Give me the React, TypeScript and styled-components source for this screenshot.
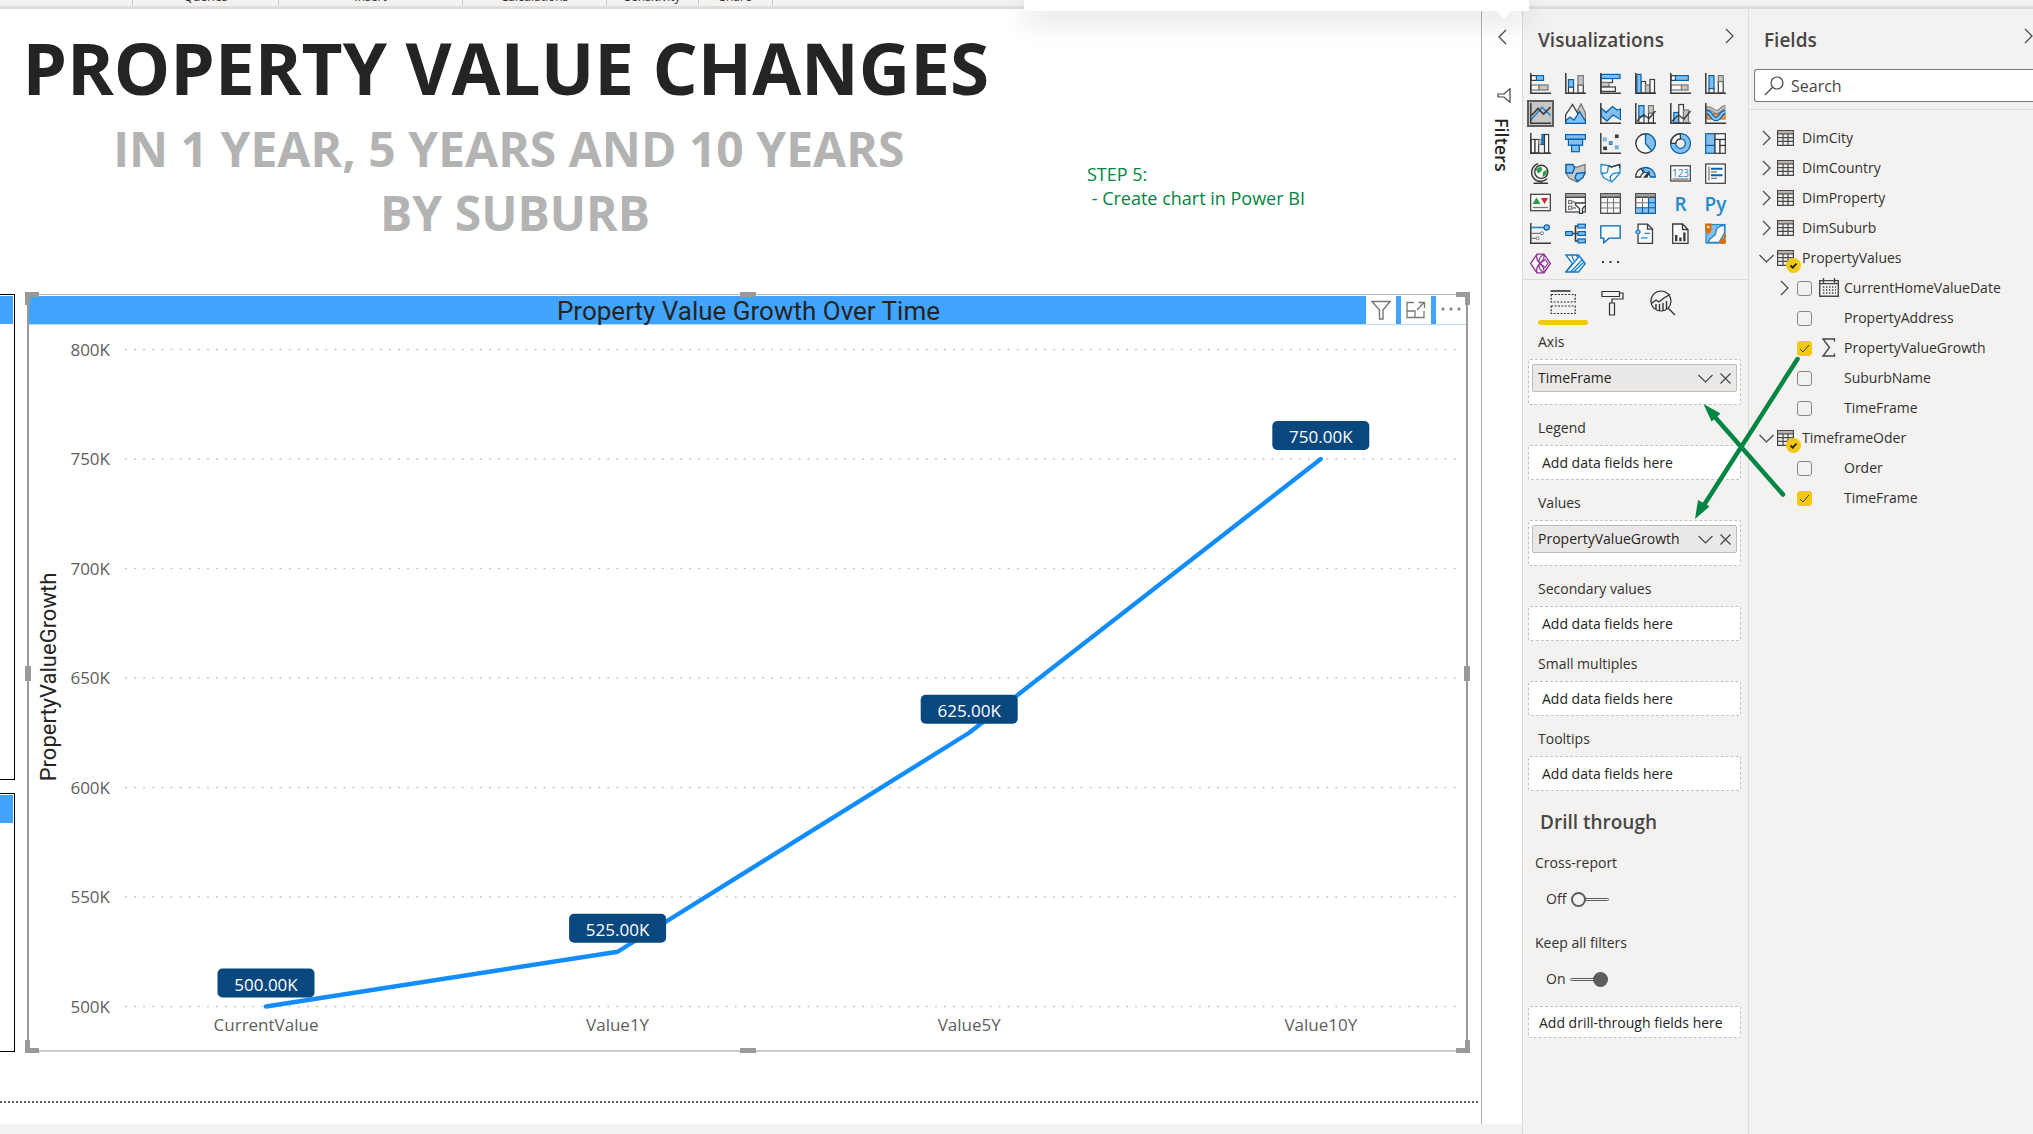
import React from "react";
import styled, { createGlobalStyle } from "styled-components";

const ui = '"Open Sans", "Noto Sans", sans-serif';
const din = 'Roboto, "Liberation Sans", sans-serif';
const green = "#008542";

const Global = createGlobalStyle`
  *, *::before, *::after { box-sizing: border-box; }
  body { margin: 0; font-family: ${ui}; color: #323130; background: #f3f2f1; }
  button, input { font: inherit; color: inherit; }
  button { padding: 0; border: 0; background: none; cursor: pointer; }
  svg { display: block; }
  h1, h2, h3, p, ul { margin: 0; padding: 0; }
  ul { list-style: none; }
`;

const Shell = styled.div`
  position: relative;
  display: flex;
  flex-direction: column;
  min-height: 100vh;
  overflow: hidden;
`;

/* Ribbon */
const Ribbon = styled.div`
  display: flex;
  height: 9px;
  align-items: flex-end;
  background: #f3f2f1;
  border-bottom: 3px solid #dfdedd;
`;
const RibbonGroup = styled.div<{ $w: number }>`
  width: ${(p) => p.$w}px;
  height: 100%;
  display: flex;
  align-items: flex-end;
  justify-content: center;
  border-right: 1px solid #c8c6c4;
  font-size: 12px;
  line-height: 16px;
  border-bottom: 1px solid #f3f2f1;
`;
const Callout = styled.div`
  position: absolute;
  z-index: 3;
  top: 0;
  left: 1024px;
  width: 505px;
  height: 11px;
  background: #fff;
  box-shadow: 0 8px 28px rgba(0, 0, 0, 0.2);
  &::after {
    content: "";
    position: absolute;
    top: 11px;
    right: 17px;
    border: 8px solid transparent;
    border-top-color: #fff;
    border-bottom: 0;
  }
`;

const Body = styled.div`
  flex: 1;
  display: flex;
  align-items: stretch;
`;

/* Report canvas */
const Report = styled.main`
  flex: 1;
  min-width: 0;
  display: flex;
  flex-direction: column;
  margin-bottom: 12px;
  background: #fff;
  border-right: 1px solid #b3b0ad;
`;
const Banner = styled.header`
  display: flex;
  align-items: flex-start;
  height: 283px;
`;
const Titles = styled.div`
  width: 1030px;
  padding-top: 10px;
  text-align: center;
  font-weight: 700;
  white-space: nowrap;
`;
const Title = styled.h1`
  font-size: 71px;
  line-height: 98px;
  color: #252423;
`;
const Subtitle = styled.p`
  font-size: 48px;
  line-height: 64px;
  color: #b3b3b3;
`;
const Note = styled.p`
  padding: 153px 0 0 57px;
  font-size: 18px;
  line-height: 24px;
  color: ${green};
  white-space: pre;
`;
const Visuals = styled.div`
  flex: 1;
  display: flex;
  align-items: stretch;
  padding: 2px 13px 0 0;
`;
const Neighbours = styled.div`
  width: 15px;
  margin-right: 12px;
  display: flex;
  flex-direction: column;
  gap: 13px;
`;
const Neighbour = styled.div<{ $grow: number }>`
  flex: ${(p) => p.$grow} 0 0;
  border: 1px solid #000;
  border-left: 0;
  padding: 1px 1px 0 0;
  &::before {
    content: "";
    display: block;
    height: 28px;
    background: #41a4ff;
  }
`;
const Visual = styled.section`
  position: relative;
  flex: 1;
  display: flex;
  flex-direction: column;
  border: solid #999;
  border-width: 1px 2px;
  border-top-color: #bebbb8;
  border-bottom: 2px solid #cdcbc9;
`;
const VisualHead = styled.div`
  display: flex;
  align-items: stretch;
  height: 29px;
  margin-top: 1px;
  background: #41a4ff;
  border-bottom: 1px solid #b5dbff;
`;
const VisualTitle = styled.h2`
  flex: 1;
  padding-left: 102px;
  text-align: center;
  font: 400 26px/30px ${din};
  color: #252423;
`;
const HeadButtons = styled.div`
  display: flex;
  gap: 5px;
`;
const HeadButton = styled.button`
  width: 30px;
  display: grid;
  place-items: center;
  background: #fff;
`;
const Plot = styled.svg`
  flex: 1;
  width: 100%;
  min-height: 0;
`;
const Handle = styled.span<{ $at: string }>`
  position: absolute;
  ${(p) =>
    (
      ({
        t: "top:-3px;left:calc(50% - 8px);width:16px;height:5px;background:#999;",
        b: "bottom:-3px;left:calc(50% - 8px);width:16px;height:5px;background:#999;",
        l: "left:-4px;top:calc(50% - 7px);width:6px;height:15px;background:#999;",
        r: "right:-4px;top:calc(50% - 7px);width:6px;height:15px;background:#999;",
        tl: "top:-3px;left:-4px;border-width:5px 0 0 5px;",
        tr: "top:-3px;right:-4px;border-width:5px 5px 0 0;",
        bl: "bottom:-3px;left:-4px;border-width:0 0 5px 5px;",
        br: "bottom:-3px;right:-4px;border-width:0 5px 5px 0;",
      }) as Record<string, string>
    )[p.$at]}
  ${(p) => p.$at.length === 2 && "width:14px;height:13px;border-style:solid;border-color:#999;"}
`;
const PageEdge = styled.div`
  height: 72px;
  padding: 49px 2px 0 0;
  &::before {
    content: "";
    display: block;
    height: 2px;
    background: repeating-linear-gradient(90deg, #605e5c 0 2px, #fff 2px 4px);
  }
`;

/* Filters rail */
const Rail = styled.aside`
  width: 40px;
  margin-bottom: 12px;
  display: flex;
  flex-direction: column;
  align-items: center;
  padding-top: 20px;
  background: #fff;
`;
const RailTitle = styled.h2`
  margin-top: 15px;
  writing-mode: vertical-rl;
  font-size: 18px;
  font-weight: 600;
  line-height: 24px;
  color: #252423;
`;
const RailIcon = styled.span`
  margin-top: 43px;
  padding-left: 3px;
`;

/* Panes */
const Panes = styled.div`
  position: relative;
  display: flex;
`;
const Pane = styled.aside<{ $w: number }>`
  width: ${(p) => p.$w}px;
  border-left: 1px solid #dddbda;
  background: #f3f2f1;
  overflow: hidden;
`;
const PaneHead = styled.div<{ $h: number; $right: number }>`
  display: flex;
  justify-content: space-between;
  height: ${(p) => p.$h}px;
  padding: 17px ${(p) => p.$right}px 0 15px;
  button { height: 20px; }
`;
const PaneTitle = styled.h2`
  font-size: 19px;
  font-weight: 600;
  line-height: 28px;
  color: #484644;
`;
const Gallery = styled.div`
  display: grid;
  grid-template-columns: repeat(6, 27px);
  grid-auto-rows: 27px;
  gap: 3px 8px;
  padding-left: 4px;
  height: 209px;
`;
const GalleryButton = styled.button<{ $on?: boolean }>`
  display: grid;
  place-items: center;
  ${(p) => p.$on && "background:#c8c6c4; box-shadow: inset 0 0 0 2px #605e5c;"}
`;
const Glyph = styled.span`
  font-size: 19px;
  font-weight: 600;
  line-height: 20px;
  color: #2488c9;
`;
const Tabs = styled.div`
  display: flex;
  height: 46px;
  padding-left: 15px;
  border-top: 1px solid #dddbda;
`;
const Tab = styled.button<{ $on?: boolean }>`
  width: 50px;
  height: 45px;
  display: flex;
  flex-direction: column;
  align-items: center;
  justify-content: space-between;
  padding-top: 10px;
  &::after {
    content: "";
    width: 50px;
    height: 5px;
    border-radius: 3px;
    background: ${(p) => (p.$on ? "#f2c811" : "transparent")};
  }
`;
const Wells = styled.div`
  display: flex;
  flex-direction: column;
  gap: 13px;
  padding: 7px 7px 0 5px;
`;
const WellLabel = styled.h3`
  margin: 0 0 7px 10px;
  font-size: 14px;
  font-weight: 400;
  line-height: 20px;
  color: #323130;
`;
const WellBox = styled.div<{ $filled?: boolean }>`
  height: ${(p) => (p.$filled ? 46 : 35)}px;
  padding: ${(p) => (p.$filled ? "4px 3px" : "0 13px")};
  border: 1px dashed #c3c1bf;
  border-radius: 2px;
  background: #fff;
  font-size: 14px;
  line-height: 33px;
  color: #252423;
`;
const Chip = styled.div`
  display: flex;
  align-items: center;
  height: 28px;
  padding: 0 5px;
  border: 1px solid #bebbb8;
  border-radius: 2px;
  background: #ebe9e8;
  line-height: 26px;
  span { flex: 1; }
  button + button { margin-left: 7px; }
`;
const Drill = styled.div`
  padding: 15px 7px 0 5px;
`;
const DrillTitle = styled.h2`
  margin-left: 12px;
  font-size: 19px;
  font-weight: 600;
  line-height: 32px;
  color: #484644;
`;
const Option = styled.div`
  height: 80px;
  padding: 15px 0 0 7px;
  font-size: 14px;
  line-height: 20px;
`;
const Switch = styled.label`
  display: flex;
  align-items: center;
  gap: 5px;
  margin: 16px 0 0 11px;
`;
const SwitchInput = styled.input`
  appearance: none;
  position: relative;
  width: 38px;
  height: 15px;
  margin: 0;
  &::before {
    content: "";
    position: absolute;
    inset: 6px 0;
    border: 1px solid #605e5c;
    border-radius: 2px;
  }
  &::after {
    content: "";
    position: absolute;
    left: 0;
    width: 15px;
    height: 15px;
    border: 2px solid #605e5c;
    border-radius: 50%;
    background: #f3f2f1;
  }
  &:checked::after { left: auto; right: 0; background: #605e5c; }
`;
const DrillBox = styled(WellBox)`
  height: 32px;
  margin-top: 8px;
  padding: 0 10px;
  line-height: 31px;
  white-space: nowrap;
`;

/* Fields */
const SearchBox = styled.label`
  display: flex;
  align-items: center;
  height: 33px;
  margin-left: 5px;
  padding-left: 9px;
  gap: 7px;
  border: 1px solid #797775;
  border-right: 0;
  border-radius: 3px 0 0 3px;
  background: #fff;
`;
const SearchInput = styled.input`
  flex: 1;
  min-width: 0;
  padding: 0;
  border: 0;
  outline: 0;
  background: none;
  font-size: 16px;
  line-height: 24px;
  &::placeholder { color: #484644; opacity: 1; }
`;
const Tree = styled.ul`
  margin-top: 7px;
  padding-top: 13px;
  border-top: 1px solid #dddbda;
  font-size: 14px;
  line-height: 30px;
`;
const TableRow = styled.div`
  display: flex;
  align-items: center;
  height: 30px;
  padding-left: 9px;
`;
const Twisty = styled.button`
  width: 16px;
  height: 16px;
  display: grid;
  place-items: center;
`;
const TableIcon = styled.span`
  position: relative;
  margin: 0 8px 0 3px;
`;
const Badge = styled.span`
  position: absolute;
  left: 9px;
  top: 8px;
`;
const FieldRow = styled.div`
  display: flex;
  align-items: center;
  height: 30px;
  padding-left: 27px;
`;
const TwistySlot = styled.span`
  width: 20px;
  height: 16px;
`;
const FieldLabel = styled.label`
  display: flex;
  align-items: center;
`;
const Check = styled.input`
  appearance: none;
  width: 15px;
  height: 15px;
  margin: 0 7px 0 1px;
  border: 1px solid #8a8886;
  border-radius: 3px;
  background: transparent;
  &:checked {
    border-color: #f2c811;
    background: #f2c811
      url("data:image/svg+xml,%3Csvg xmlns='http://www.w3.org/2000/svg' viewBox='0 0 13 13'%3E%3Cpath d='M2 7l3 3 6-7' fill='none' stroke='%234a4020' stroke-width='1'/%3E%3C/svg%3E")
      center / 13px no-repeat;
  }
`;
const FieldIcon = styled.span`
  width: 25px;
  height: 20px;
`;
const Arrows = styled.svg`
  position: absolute;
  top: 341px;
  left: 160px;
  pointer-events: none;
`;

/* ---- icons ---- */
const D = "#3b3a39";
const G = "#797775";
const GF = "#c8c6c4";
const B = "#0063b1";
const BF = "#83beec";
const W = "#fafafa";
const axis = <path d="M.8 0V20.2H21" fill="none" stroke={D} strokeWidth="1.5" />;
const r = (x: number, y: number, x2: number, y2: number, f: string, s: string) => (
  <rect key={`${x}-${y}-${x2}-${y2}`} x={x} y={y} width={x2 - x} height={y2 - y} fill={f} stroke={s} strokeWidth="1.2" />
);
const p = (d: string, s: string = D, f: string = "none", w: number = 1.3) => (
  <path d={d} fill={f} stroke={s} strokeWidth={w} />
);

const gallery: [string, React.ReactNode][] = [
  ["Stacked bar chart", <>{r(1, 2.6, 6.5, 7.4, W, D)}{r(6.5, 2.6, 13.5, 7.4, BF, B)}{r(1, 12, 9, 17, W, G)}{r(9, 12, 18, 17, GF, G)}{axis}</>],
  ["Stacked column chart", <>{r(3.5, 14, 8.5, 20, W, D)}{r(3.5, 6.6, 8.5, 14, BF, B)}{r(13, 12, 18.3, 20, W, D)}{r(13, 2.6, 18.3, 12, GF, G)}{axis}</>],
  ["Clustered bar chart", <>{r(1, 5.5, 12.5, 9.5, W, D)}{r(1, 9.5, 9, 14, GF, G)}{r(1, 14, 15.4, 18.4, W, D)}{r(1, 1.4, 20, 5.5, BF, B)}{axis}</>],
  ["Clustered column chart", <>{r(6, 8.5, 10.5, 20, W, D)}{r(10.5, 12, 15, 20, GF, G)}{r(15, 6.5, 19.5, 20, W, D)}{r(1.8, 1.4, 6, 20, BF, B)}{axis}</>],
  ["100% stacked bar chart", <>{r(1, 2.6, 5.5, 7.4, W, D)}{r(5.5, 2.6, 18.3, 7.4, BF, B)}{r(1, 12, 11.5, 17, W, G)}{r(11.5, 12, 18, 17, GF, G)}{axis}</>],
  ["100% stacked column chart", <>{r(4, 15.5, 9, 20, W, D)}{r(4, 2.6, 9, 15.5, BF, B)}{r(13.3, 8.5, 18.2, 20, W, D)}{r(13.3, 2.6, 18.2, 8.5, GF, G)}{axis}</>],
  ["Line chart", <>{p("M1 17L12 4.5L20.5 12.5", "#2488c9", "none", 1.6)}{p("M1.5 12.5L8 5.5L13.5 11L20.5 4", D, "none", 1.6)}{axis}</>],
  ["Area chart", <>{p("M10 12L16 .8L20.5 10V20H10z", G, GF)}{p("M.6 20V12L7.5 1.5L13.5 12V20z", D, W)}{p("M1 20.3L1 17.5L5 14L9 17L14.5 8.500L20.4 18V20.3z", B, BF)}</>],
  ["Stacked area chart", <>{p("M1 5L6 9.5L12.5 3.5L17 7L20.5 6V16.5L13 12L7 18L1 13z", B, BF)}{axis}</>],
  ["Line and stacked column chart", <>{r(3.8, 13.5, 9, 20, W, D)}{r(3.8, 2.6, 9, 13.5, BF, B)}{r(13.5, 10, 18.4, 20, W, D)}{r(13.5, 2.6, 18.4, 10, GF, G)}{p("M1.5 18.5L8.5 11.5L14 15.5L20.5 8")}{axis}</>],
  ["Line and clustered column chart", <>{r(3.8, 9.5, 8.8, 20, BF, B)}{r(8.8, 1.5, 13.5, 20, W, D)}{r(13.5, 7, 18.5, 20, GF, G)}{p("M1.5 18.5L8.5 12L14 16L20.5 8")}{axis}</>],
  ["Ribbon chart", <>{r(2, 11, 20, 16, "#f0a15a", "#d9690c")}{p("M1 5C8 5 8 9 12 9S16 4 20.5 4", G, "none", 4)}{p("M1 5C8 5 8 9 12 9S16 4 20.5 4", GF, "none", 2)}{p("M1.5 9C7 9 6 16 11 16S15 9 20.5 9", B, "none", 4.6)}{p("M1.5 9C7 9 6 16 11 16S15 9 20.5 9", BF, "none", 2.2)}{axis}</>],
  ["Waterfall chart", <>{r(1, 6.5, 5, 20, W, D)}{r(5, 6.5, 8.6, 20, W, D)}{r(8.6, 6.5, 12, 11.5, GF, G)}{r(12, 1.5, 14.5, 11.5, "#2488c9", B)}{r(14.5, 1.5, 18.6, 20, W, D)}{axis}</>],
  ["Funnel chart", <>{r(.6, 1.6, 20.4, 6.3, BF, B)}{r(3.4, 6.3, 17.6, 12.3, BF, B)}{r(6.6, 12.3, 14.3, 18.7, BF, B)}</>],
  ["Scatter chart", <><rect x="15" y="1.5" width="3.6" height="3.6" fill={D} />{r(3.4, 5, 6.4, 8, BF, "#8fb6d6")}{r(9.4, 8.8, 12, 11.4, BF, "#2488c9")}<rect x="3.2" y="13.5" width="3.8" height="3.6" fill={D} />{r(15.6, 13, 18, 15.6, BF, "#5aa9e0")}{axis}</>],
  ["Pie chart", <><circle cx="10.5" cy="10.5" r="9.7" fill={W} stroke={D} strokeWidth="1.4" />{p("M10.5.8A9.7 9.7 0 0 1 16.8 17.9L10.5 10.5z", B, BF)}</>],
  ["Donut chart", <><circle cx="10.5" cy="10.5" r="7.4" fill="none" stroke={B} strokeWidth="6.4" /><circle cx="10.5" cy="10.5" r="7.4" fill="none" stroke={BF} strokeWidth="4" />{p("M.9 10.4A9.7 9.7 0 0 1 10.4.8V6A4.6 4.6 0 0 0 5.8 10.4z", D, W)}</>],
  ["Treemap", <>{r(.7, .7, 10, 12.5, BF, B)}{r(.7, 12.5, 10, 20.3, BF, B)}{r(10, .7, 20.3, 6.5, W, D)}{r(10, 6.5, 15, 20.3, W, D)}{r(15, 6.5, 20.3, 12.5, W, D)}{r(15, 12.5, 20.3, 20.3, W, D)}</>],
  ["Map", <><circle cx="11.3" cy="8.8" r="6.6" fill={W} stroke={D} strokeWidth="1.4" /><path d="M6 6L11 3.5L12.5 6.5L9 10.5L7 9zM13 9L17 6.5L16.5 11.5L12.5 14z" fill="#2c9a4b" />{p("M8 .8A9 9 0 1 0 17 15.8M11 17.5V20M3.500 20.3H18", D, "none", 1.5)}</>],
  ["Filled map", <>{p("M1 2L9 3L11 4.5L20 1.5V11L12 19L4 15L1 10z", G, GF)}{p("M1 1.5H8L9.5 5L7.5 10L1 10z", B, BF)}{p("M11.5 10.5L20 9.5L18 14.5L12.5 18.5L10 15z", B, BF)}</>],
  ["Shape map", <>{p("M1 1.5L9 2.5L11 4L20 1.5V10L12 19L4 15L1 10z", "#2488c9", W)}{p("M8.5 2.5L7.5 9L4 10.5L1.5 10M11 18L10 14L13 10.5L20 9.5", "#2488c9")}{p("M9 2.8L11.5 4L19.5 1.3V5")}</>],
  ["Gauge", <>{p("M.7 14A9.8 9.8 0 0 1 6 5.4L8.4 9.8A5 5 0 0 0 5.6 14z", D, W)}{p("M7.5 5A9.8 9.8 0 0 1 20.3 14H15.4A5 5 0 0 0 9.5 9.4z", B, BF)}{p("M9.5 14L14.5 8.5L12 14z", D, D)}</>],
  ["Card", <>{r(.7, 2.8, 20.3, 18, W, D)}<text x="10.5" y="13.500" textAnchor="middle" fontSize="10" fill="#2488c9" fontFamily="Open Sans">123</text>{p("M2.5 16H18.5", G)}</>],
  ["Multi-row card", <>{r(.7, 1, 20.3, 20.3, W, D)}{p("M4 3.5V17.5", G)}{p("M6 5.8H17.5M6 12.2H17.5", B, "none", 2)}{p("M6 8.8H12M6 15.4H12", G)}</>],
  ["KPI", <>{r(.7, 1.3, 20.3, 17.7, W, D)}<path d="M2.5 11L6.5 4.5L10.5 11z" fill="#2c9a4b" /><path d="M11 5H18L14.5 11z" fill="#d6272e" />{p("M3 14.5H18", G)}</>],
  ["Slicer", <>{r(.7, .7, 20.3, 19, W, D)}<rect x="1.200" y="1.200" width="18.600" height="2.600" fill="#a19f9d" />{p("M.7 4.300H20.3", D)}{p("M7.5 9H10M7.5 15H11", G)}{r(3.6, 7.5, 6.8, 10.5, W, G)}{r(3.6, 13.2, 6.8, 16.3, W, G)}{p("M10.500 10H21V12L17.5 15.500V20.5H14.500V15.500L10.500 12z", D, W)}</>],
  ["Table", <>{r(.7, .7, 20.3, 20.3, W, D)}<rect x="1" y="1" width="19" height="3" fill="#a19f9d" />{p("M.7 4.3H20.3", D)}{p("M7.5 4V20M13.5 4V20M1 9.8H20M1 15H20", G, "none", 1.1)}</>],
  ["Matrix", <>{r(.7, .7, 20.3, 20.3, W, D)}<rect x="1" y="1" width="19" height="3" fill="#a19f9d" /><path d="M14 4.5H20V20H1V15H14z" fill={BF} />{p("M.7 4.3H20.3", D)}{p("M7.5 4V15M13.5 4V15M1 9.8H14", G, "none", 1.1)}{p("M1 14.7H20.3M7.5 15V20.3M13.5 4.5V20.3M14 9.8H20M.7 20.3H20.3V4.5", B, "none", 1.1)}</>],
  ["R script visual", "R"],
  ["Python visual", "Py"],
  ["Key influencers", <>{axis}{p("M1 4.5H14", "#2488c9", "none", 1.7)}<circle cx="16.7" cy="4.5" r="2.7" fill={BF} stroke={B} strokeWidth="1.2" />{p("M1 10.3H10.5M1 15.3H6", G)}<circle cx="12" cy="10.3" r="1.5" fill={W} stroke={G} /><circle cx="7.5" cy="15.3" r="1.5" fill={W} stroke={G} /></>],
  ["Decomposition tree", <>{p("M7 10.5H13M13 3H10.5V18H13", D, "none", 1.6)}{r(.7, 8.6, 7.3, 12.4, BF, B)}{r(13, 1.2, 20.3, 5, BF, B)}{r(13, 8.6, 20.3, 12.4, BF, B)}{r(13, 16, 20.3, 19.8, BF, B)}</>],
  ["Q&A", <>{p("M.8 2.8H20.2V15.2H9L3.8 19.8V15.2H.8z", B, W)}</>],
  ["Smart narrative", <>{p("M3 6.5V1.2H12.5L17.5 6.2V20.3H3V12", D, W)}{p("M12.5 1.2V6.2H17.5", D)}<circle cx="3" cy="9" r="2.200" fill={BF} stroke={B} />{p("M9.5 10.3H15M6 14.8H12.500", "#2488c9", "none", 1.2)}</>],
  ["Paginated report", <>{p("M2.7 1H12.5L18 6.5V20.3H2.7z", D, W)}{p("M12.5 1V6.5H18", D)}{p("M6.2 12V18.3M10.4 14.5V18.3M14.4 9.5V18.3", D, "none", 2.4)}</>],
  ["ArcGIS map", <>{r(1, 1.5, 20, 20, BF, "#2488c9")}{p("M3 19.500C5 13 11 14 11 9S15 3 19.500 2V10L14 19.500z", "#2488c9", W)}<path d="M.2.5H6.5V7L3.4 12L.2 7z" fill="#e06c00" /><circle cx="3.3" cy="4" r="1.3" fill={W} /><circle cx="17.8" cy="18.3" r="3" fill="#e06c00" /><circle cx="20" cy="13" r="1.8" fill="#e06c00" /></>],
  ["Power Apps", <>{p("M7 1.200H14L20.3 10.5L14 19.800H7L.7 10.5z", "#8e2f96", W)}<g fill="none" stroke="#8e2f96" strokeWidth="1.200"><path d="M7 1.200C6 5 7 8 10 10.500C7 13 6 16 7 19.800M14 1.200C9 4 8 8 10 10.500C12.500 8 15 5 14 1.200M14 19.800C15 16 12.500 13 10 10.500C8 13 9 17 14 19.800" /><path d="M10 10.500L15 6.500L18 10.500L15 14.500z" /></g></>],
  ["Power Automate", <>{p("M.8 2H13.5L20.3 10.5L13.5 19H.8L7.5 10.5z", "#1079c4", W)}{p("M1 19L14.500 3M5.500 19L17.500 6.500M6.5 2L9 8M11 2L13 5M8.500 19L19 9", "#1079c4", "none", 1.2)}</>],
  ["Get more visuals", <g key="m" fill="#323130"><rect x="2" y="8" width="2" height="2" /><rect x="9.5" y="8" width="2" height="2" /><rect x="17" y="8" width="2" height="2" /></g>],
];

const Svg = ({ w, h, children, c = "#484644" }: { w: number; h: number; children: React.ReactNode; c?: string }) => (
  <svg width={w} height={h} viewBox={`0 0 ${w} ${h}`} fill="none" stroke={c} strokeWidth="1.2" aria-hidden>
    {children}
  </svg>
);
const ChevronRight = () => <Svg w={9} h={16}><path d="M1 1l7 7-7 7" /></Svg>;
const ChevronLeft = () => <Svg w={9} h={16}><path d="M8 1L1 8l7 7" /></Svg>;
const ChevronDown = () => <Svg w={15} h={9}><path d="M.5 1l7 7 7-7" /></Svg>;
const Cross = () => <Svg w={11} h={11}><path d="M.5.5l10 10M10.5.5l-10 10" /></Svg>;
const GridIcon = () => (
  <Svg w={17} h={16}>
    <path d="M.6.6h15.8v14.8H.6zM1 3.8h15.4M1 7.6h15.4M1 11.4h15.4M6 4v11.4M11 4v11.4" />
    <path d="M1 2.2h15.4" stroke="#a19f9d" />
  </Svg>
);
const SelectedBadge = () => (
  <Badge>
    <svg width="15" height="15" viewBox="0 0 15 15">
      <circle cx="7.5" cy="7.5" r="7.5" fill="#f2c811" />
      <path d="M4.5 7.5l2.2 2.2 3.8-4" fill="none" stroke="#252423" strokeWidth="1.8" />
    </svg>
  </Badge>
);
const Calendar = () => (
  <Svg w={20} h={19}>
    <path d="M.7 2.6h18.6v15.7H.7zM.7 5.6h18.6M4.5 0v5M15.5 0v5" strokeWidth="1.4" />
    <path d="M4 9h13M4 12h13M4 15h13" strokeDasharray="1.4 1.6" strokeWidth="1.5" />
  </Svg>
);
const Sigma = () => <Svg w={18} h={19}><path d="M15.5 3.5V1H4l6.5 8.5L4 18h11.5v-2.5" strokeWidth="1.4" /></Svg>;

/* ---- chart ---- */
const data = [
  { label: "CurrentValue", value: 500 },
  { label: "Value1Y", value: 525 },
  { label: "Value5Y", value: 625 },
  { label: "Value10Y", value: 750 },
];
const ticks = [800, 750, 700, 650, 600, 550, 500];
const yOf = (v: number) => 681.5 - (v - 500) * 2.19;
const xOf = (i: number) => 237 + i * 351.6;

const Chart = () => (
  <Plot viewBox="0 0 1437 725" preserveAspectRatio="none" fontFamily={ui} fontSize="17">
    <text transform="translate(27 352) rotate(-90)" textAnchor="middle" fontFamily={din} fontSize="22" fill="#252423">
      PropertyValueGrowth
    </text>
    {ticks.map((t) => (
      <g key={t}>
        <line x1="96" x2="1428" y1={yOf(t)} y2={yOf(t)} stroke="#c8c6c4" strokeWidth="1.5" strokeDasharray="2 7.1" />
        <text x="81" y={yOf(t) + 6} textAnchor="end" fill="#605e5c">{t}K</text>
      </g>
    ))}
    <polyline points={data.map((d, i) => `${xOf(i)},${yOf(d.value)}`).join(" ")} fill="none" stroke="#118dff" strokeWidth="4.4" strokeLinejoin="round" strokeLinecap="round" />
    {data.map((d, i) => (
      <g key={d.label}>
        <rect x={xOf(i) - 48.5} y={yOf(d.value) - 38} width="97" height="29" rx="5" fill="#09477f" />
        <text x={xOf(i)} y={yOf(d.value) - 16} textAnchor="middle" fill="#fff">{d.value}.00K</text>
        <text x={xOf(i)} y="706" textAnchor="middle" fill="#605e5c">{d.label}</text>
      </g>
    ))}
  </Plot>
);

/* ---- data panes ---- */
const wells = [
  { label: "Axis", field: "TimeFrame" },
  { label: "Legend" },
  { label: "Values", field: "PropertyValueGrowth" },
  { label: "Secondary values" },
  { label: "Small multiples" },
  { label: "Tooltips" },
];
type Field = { name: string; on?: boolean; icon?: React.ReactNode; expand?: boolean };
const tables: { name: string; fields?: Field[] }[] = [
  { name: "DimCity" },
  { name: "DimCountry" },
  { name: "DimProperty" },
  { name: "DimSuburb" },
  {
    name: "PropertyValues",
    fields: [
      { name: "CurrentHomeValueDate", icon: <Calendar />, expand: true },
      { name: "PropertyAddress" },
      { name: "PropertyValueGrowth", on: true, icon: <Sigma /> },
      { name: "SuburbName" },
      { name: "TimeFrame" },
    ],
  },
  { name: "TimeframeOder", fields: [{ name: "Order" }, { name: "TimeFrame", on: true }] },
];

export default function App() {
  return (
    <Shell>
      <Global />
      <Ribbon>
        <RibbonGroup $w={133} />
        <RibbonGroup $w={146}>Queries</RibbonGroup>
        <RibbonGroup $w={184}>Insert</RibbonGroup>
        <RibbonGroup $w={144}>Calculations</RibbonGroup>
        <RibbonGroup $w={92}>Sensitivity</RibbonGroup>
        <RibbonGroup $w={74}>Share</RibbonGroup>
      </Ribbon>
      <Callout />
      <Body>
        <Report>
          <Banner>
            <Titles>
              <Title>PROPERTY VALUE CHANGES&nbsp;</Title>
              <Subtitle>IN 1 YEAR, 5 YEARS AND 10 YEARS&nbsp;</Subtitle>
              <Subtitle>BY SUBURB</Subtitle>
            </Titles>
            <Note>{"STEP 5:\n - Create chart in Power BI"}</Note>
          </Banner>
          <Visuals>
            <Neighbours>
              <Neighbour $grow={486} />
              <Neighbour $grow={258} />
            </Neighbours>
            <Visual>
              <VisualHead>
                <VisualTitle>Property Value Growth Over Time</VisualTitle>
                <HeadButtons>
                  <HeadButton aria-label="Filters">
                    <Svg w={20} h={20} c="#797775"><path d="M1 1.5h18L12 10v9H8.5v-9z" strokeWidth="1.4" /></Svg>
                  </HeadButton>
                  <HeadButton aria-label="Focus mode">
                    <Svg w={20} h={18} c="#797775"><path d="M8 1.5H1v15h17V10M1 10h8v6.5M11 9l7-7.5M12.5 1.5H18.5V7" strokeWidth="1.3" /></Svg>
                  </HeadButton>
                  <HeadButton aria-label="More options">
                    <svg width="20" height="6" fill="#797775"><circle cx="2" cy="2" r="1.5" /><circle cx="10" cy="2" r="1.5" /><circle cx="18" cy="2" r="1.5" /></svg>
                  </HeadButton>
                </HeadButtons>
              </VisualHead>
              <Chart />
              {["t", "b", "l", "r", "tl", "tr", "bl", "br"].map((h) => <Handle key={h} $at={h} />)}
            </Visual>
          </Visuals>
          <PageEdge />
        </Report>
        <Rail>
          <button aria-label="Expand filters"><ChevronLeft /></button>
          <RailIcon><Svg w={14} h={15}><path d="M13 .8v13.4L7 9H1V6h6z" /></Svg></RailIcon>
          <RailTitle>Filters</RailTitle>
        </Rail>
        <Panes>
          <Pane $w={226}>
            <PaneHead $h={61} $right={14}>
              <PaneTitle>Visualizations</PaneTitle>
              <button aria-label="Collapse visualizations"><ChevronRight /></button>
            </PaneHead>
            <Gallery>
              {gallery.map(([name, art], i) => (
                <GalleryButton key={name} aria-label={name} $on={i === 6}>
                  {typeof art === "string" ? <Glyph>{art}</Glyph> : <svg width="21" height="21" viewBox="0 0 21 21">{art}</svg>}
                </GalleryButton>
              ))}
            </Gallery>
            <Tabs>
              <Tab $on aria-label="Fields">
                <Svg w={26} h={26} c="#323130"><path d="M.5 1h20" strokeWidth="1.6" /><path d="M1.200 4.500h24V12H1.200zM1.200 16h24v7.500H1.200z" strokeDasharray="2 1.4" /></Svg>
              </Tab>
              <Tab aria-label="Format">
                <Svg w={24} h={26} c="#323130"><path d="M1 1.5h17.5v5H1zM18.5 3H22v6H11v4M8.5 13h5v12h-5z" /></Svg>
              </Tab>
              <Tab aria-label="Analytics">
                <Svg w={26} h={26} c="#323130"><circle cx="11" cy="11" r="10" /><path d="M18 18l7 7M2 13l4-3 3 2 5-4 6-3.500M6 14v5M9.500 14v7M13 13v8M16.500 11v8" strokeWidth="1.400" /></Svg>
              </Tab>
            </Tabs>
            <Wells>
              {wells.map((w) => (
                <section key={w.label}>
                  <WellLabel>{w.label}</WellLabel>
                  <WellBox $filled={!!w.field}>
                    {w.field ? (
                      <Chip>
                        <span>{w.field}</span>
                        <button aria-label={`${w.field} options`}><ChevronDown /></button>
                        <button aria-label={`Remove ${w.field}`}><Cross /></button>
                      </Chip>
                    ) : (
                      "Add data fields here"
                    )}
                  </WellBox>
                </section>
              ))}
            </Wells>
            <Drill>
              <DrillTitle>Drill through</DrillTitle>
              <Option>
                Cross-report
                <Switch>Off<SwitchInput type="checkbox" /></Switch>
              </Option>
              <Option>
                Keep all filters
                <Switch>On<SwitchInput type="checkbox" defaultChecked /></Switch>
              </Option>
              <DrillBox>Add drill-through fields here</DrillBox>
            </Drill>
          </Pane>
          <Pane $w={285}>
            <PaneHead $h={60} $right={0}>
              <PaneTitle>Fields</PaneTitle>
              <button aria-label="Collapse fields"><ChevronRight /></button>
            </PaneHead>
            <SearchBox>
              <Svg w={20} h={20}><circle cx="13" cy="7" r="6" /><path d="M8.500 11.500L.8 19" /></Svg>
              <SearchInput aria-label="Search" placeholder="Search" />
            </SearchBox>
            <Tree>
              {tables.map((t) => (
                <li key={t.name}>
                  <TableRow>
                    <Twisty aria-label={`Toggle ${t.name}`}>{t.fields ? <ChevronDown /> : <ChevronRight />}</Twisty>
                    <TableIcon><GridIcon />{t.fields && <SelectedBadge />}</TableIcon>
                    {t.name}
                  </TableRow>
                  {t.fields?.map((f) => (
                    <FieldRow key={f.name}>
                      <TwistySlot>{f.expand && <Twisty aria-label={`Toggle ${f.name}`}><ChevronRight /></Twisty>}</TwistySlot>
                      <FieldLabel>
                        <Check type="checkbox" defaultChecked={f.on} />
                        <FieldIcon>{f.icon}</FieldIcon>
                        {f.name}
                      </FieldLabel>
                    </FieldRow>
                  ))}
                </li>
              ))}
            </Tree>
          </Pane>
          <Arrows width="140" height="180" viewBox="0 0 140 180" stroke={green} strokeWidth="4.5" strokeLinecap="round">
            <path d="M115.500 9L22 155M101 144.500L32 66" />
            <path d="M13 169L16 150L27.500 156.500zM21.500 54L29.500 71.500L38.500 63.500z" fill={green} stroke="none" />
          </Arrows>
        </Panes>
      </Body>
    </Shell>
  );
}
